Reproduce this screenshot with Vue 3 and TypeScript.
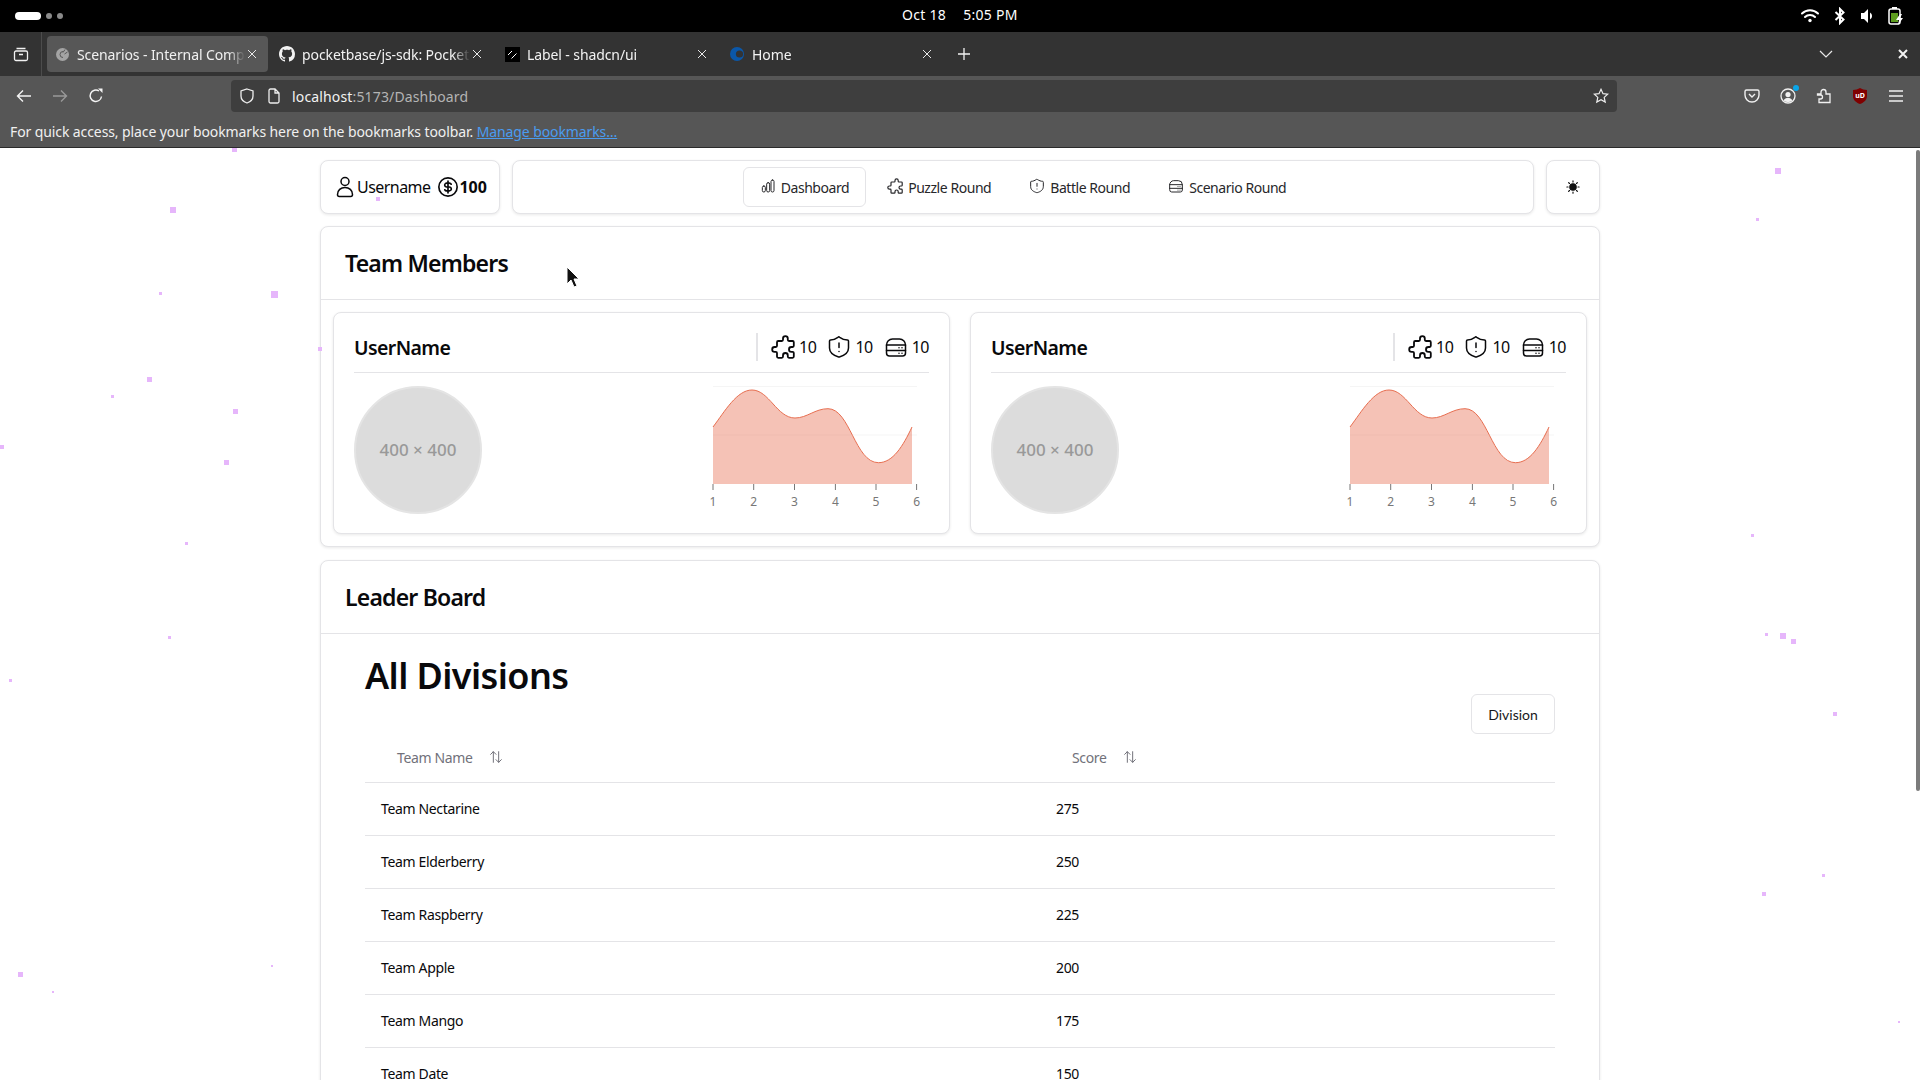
<template>
  <div class="screen">
    <!-- icon sprite -->
    <svg class="sprite" aria-hidden="true">
      <symbol id="i-puzzle" viewBox="2 2 20 20"><path transform="matrix(-1 0 0 1 24 0)" d="M4 7h3a1 1 0 0 0 1-1v-1a2 2 0 0 1 4 0v1a1 1 0 0 0 1 1h3a1 1 0 0 1 1 1v3a1 1 0 0 0 1 1h1a2 2 0 0 1 0 4h-1a1 1 0 0 0-1 1v3a1 1 0 0 1-1 1h-3a1 1 0 0 1-1-1v-1a2 2 0 0 0-4 0v1a1 1 0 0 1-1 1h-3a1 1 0 0 1-1-1v-3a1 1 0 0 1 1-1h1a2 2 0 0 0 0-4h-1a1 1 0 0 1-1-1v-3a1 1 0 0 1 1-1" /></symbol>
      <symbol id="i-shield" viewBox="0 0 24 24"><path d="M21.500 13c0 5-4.200 7.500-9.100 8.950a1 1 0 0 1-.800 0C6.700 20.500 2.500 18 2.500 13V6a1 1 0 0 1 1-1c2.400 0 5.300-1.200 7.400-2.720a1.300 1.300 0 0 1 1.800 0C14.800 3.810 18.100 5 20.500 5a1 1 0 0 1 1 1z" /><path d="M12 8v4.500M12 16.500h.01" /></symbol>
      <symbol id="i-server" viewBox="0 0 24 24"><path d="M2.500 10a6 6 0 0 1 6-6h7a6 6 0 0 1 6 6v8a3 3 0 0 1-3 3h-13a3 3 0 0 1-3-3z" /><path d="M2.500 10h19M2.500 15.500h19M15 12.800h.01M18 12.800h.01M15 18.200h.01M18 18.200h.01" /></symbol>
      <symbol id="i-bars" viewBox="0 0 24 24"><rect x="3.500" y="12" width="4.500" height="9" rx="2.200" /><rect x="10" y="7" width="4.500" height="14" rx="2.200" /><rect x="16.500" y="3" width="4.500" height="18" rx="2.200" /></symbol>
      <symbol id="i-user" viewBox="0 0 24 24"><circle cx="12" cy="6.500" r="4" /><path d="M4.500 19.500c0-4.200 3.300-7 7.500-7s7.500 2.800 7.500 7c0 1-.800 2-1.800 2H6.300c-1 0-1.800-1-1.800-2z" /></symbol>
      <symbol id="i-coin" viewBox="0 0 24 24"><circle cx="12" cy="12" r="10" /><path d="M15.500 9a2.300 2.300 0 0 0-2-1.200h-3a2.100 2.100 0 1 0 0 4.200h3a2.100 2.100 0 1 1 0 4.200h-3a2.300 2.300 0 0 1-2-1.200M12 5.500v13" /></symbol>
      <symbol id="i-sort" viewBox="0 0 24 24"><path d="M8 20V4L4 8M8 4l4 4M16 4v16l-4-4M16 20l4-4" /></symbol>
    </svg>

    <!-- desktop status bar -->
    <div class="status-bar">
      <div class="workspaces">
        <span class="ws-active"></span><span class="ws-dot"></span><span class="ws-dot"></span>
      </div>
      <div class="clock"><span>Oct 18</span><span>5:05 PM</span></div>
      <div class="tray">
        <svg width="20" height="16" viewBox="0 0 20 16" fill="none" stroke="#fff" stroke-width="2" stroke-linecap="round"><path d="M2 5.500a11.500 11.500 0 0 1 16 0M5 9a7 7 0 0 1 10 0" /><circle cx="10" cy="12.500" r="1.700" fill="#fff" stroke="none" /></svg>
        <svg width="12" height="18" viewBox="0 0 12 18" fill="none" stroke="#fff" stroke-width="2"><path d="M1.500 5l8 7.500-3.500 3.500V2l3.500 3.500-8 7.500" /></svg>
        <svg width="14" height="16" viewBox="0 0 14 16" fill="#fff"><path d="M1 5h3l4-4v14l-4-4H1z" /><path d="M10 4.500a4 4 0 0 1 0 7z" /></svg>
        <svg width="16" height="20" viewBox="0 0 16 20"><rect x="1" y="3" width="11" height="15" rx="2" fill="none" stroke="#fff" stroke-width="1.500" /><rect x="4" y="1" width="5" height="2" fill="#fff" /><rect x="3" y="7" width="7" height="9" fill="#5d9c1e" /><path d="M12 8l-4 6h3l-1 5 5-7h-3l2-4z" fill="#fff" /></svg>
      </div>
    </div>

    <!-- browser tabs -->
    <div class="tab-bar">
      <div class="sidebar-btn">
        <svg width="16" height="16" viewBox="0 0 16 16" fill="none" stroke="#f2f2f2" stroke-width="1.300"><rect x="1.500" y="5" width="13" height="9.500" rx="1.500" /><path d="M3.500 2.500h9M6 8.500h4" /></svg>
      </div>
      <div v-for="tab in tabs" :key="tab.title" class="tab" :class="{ 'tab--active': tab.active }">
        <span class="favicon">
          <svg v-if="tab.icon === 'github'" width="16" height="16" viewBox="0 0 16 16" fill="#f2f2f2"><path d="M8 0C3.580 0 0 3.580 0 8c0 3.540 2.290 6.530 5.470 7.590.4.070.55-.17.55-.38 0-.19-.01-.82-.01-1.490-2.010.37-2.530-.49-2.690-.94-.09-.23-.48-.94-.82-1.130-.28-.15-.68-.52-.01-.53.630-.01 1.080.58 1.230.82.720 1.210 1.870.87 2.330.66.070-.52.280-.87.510-1.070-1.780-.2-3.640-.89-3.640-3.950 0-.87.310-1.590.820-2.150-.08-.2-.36-1.020.080-2.120 0 0 .670-.21 2.200.82.640-.18 1.320-.27 2-.27s1.360.09 2 .27c1.530-1.040 2.200-.82 2.200-.82.440 1.100.160 1.920.080 2.120.510.560.820 1.270.820 2.150 0 3.070-1.870 3.750-3.650 3.950.290.250.540.730.540 1.480 0 1.070-.010 1.930-.010 2.200 0 .210.150.460.550.380A8.010 8.010 0 0 0 16 8c0-4.420-3.580-8-8-8z" /></svg>
          <svg v-else-if="tab.icon === 'shadcn'" width="15" height="15" viewBox="0 0 15 15"><rect width="15" height="15" fill="#000" /><path d="M3 8l4-4M6.500 11.500l5-5" stroke="#fff" stroke-width="1" /></svg>
          <svg v-else-if="tab.icon === 'home'" width="16" height="16" viewBox="0 0 16 16"><circle cx="8" cy="8" r="7" fill="#0b57a8" /><circle cx="10.500" cy="8" r="3.600" fill="#333" /></svg>
          <svg v-else width="15" height="15" viewBox="0 0 15 15"><circle cx="7.500" cy="7.500" r="6.500" fill="#a4a4a4" /><path d="M8 4.500a3 3 0 1 0 0 6M10 2.500l-2 3M12.500 5l-3 2" stroke="#575757" fill="none" /></svg>
        </span>
        <span class="tab-title">{{ tab.title }}</span>
        <svg class="tab-close" width="10" height="10" viewBox="0 0 10 10" stroke="#e8e8e8" stroke-width="1"><path d="M1 1l8 8M9 1l-8 8" /></svg>
      </div>
      <svg class="new-tab" width="14" height="14" viewBox="0 0 14 14" stroke="#f2f2f2" stroke-width="1.300"><path d="M7 1v12M1 7h12" /></svg>
      <div class="tab-bar-end">
        <svg width="14" height="8" viewBox="0 0 14 8" fill="none" stroke="#e8e8e8" stroke-width="1.200"><path d="M1 1l6 6 6-6" /></svg>
        <svg width="10" height="10" viewBox="0 0 10 10" stroke="#f2f2f2" stroke-width="2"><path d="M1 1l8 8M9 1l-8 8" /></svg>
      </div>
    </div>

    <!-- browser toolbar -->
    <div class="toolbar">
      <div class="nav-buttons">
        <svg width="16" height="14" viewBox="0 0 16 14" fill="none" stroke="#f4f4f4" stroke-width="1.400"><path d="M15 7H1.500M7 1.500L1.500 7 7 12.500" /></svg>
        <svg width="16" height="14" viewBox="0 0 16 14" fill="none" stroke="#999" stroke-width="1.400"><path d="M1 7h13.500M9 1.500L14.500 7 9 12.500" /></svg>
        <svg width="16" height="16" viewBox="0 0 16 16" fill="none" stroke="#f4f4f4" stroke-width="1.400"><path d="M13.500 8.500A5.700 5.700 0 1 1 11 3" /><path d="M10 .5h4.500V5z" fill="#f4f4f4" stroke="none" /></svg>
      </div>
      <div class="url-box">
        <svg width="14" height="16" viewBox="0 0 14 16" fill="none" stroke="#eee" stroke-width="1.300"><path d="M7 1l6 2v5c0 3.500-3 6-6 7-3-1-6-3.500-6-7V3z" /></svg>
        <svg width="12" height="16" viewBox="0 0 12 16" fill="none" stroke="#eee" stroke-width="1.300"><path d="M1 2.500A1.500 1.500 0 0 1 2.500 1H7l4 4v8.500a1.500 1.500 0 0 1-1.500 1.500h-7A1.500 1.500 0 0 1 1 13.500zM7 1v4h4" /></svg>
        <span class="url"><span class="url-host">localhost</span>:5173/Dashboard</span>
        <svg class="url-star" width="16" height="16" viewBox="0 0 16 16" fill="none" stroke="#eee" stroke-width="1.200"><path d="M8 1.300l2 4.400 4.700.5-3.500 3.200 1 4.700L8 11.700l-4.200 2.400 1-4.700L1.300 6.200 6 5.700z" /></svg>
      </div>
      <div class="toolbar-icons">
        <svg width="16" height="14" viewBox="0 0 16 14" fill="none" stroke="#f0f0f0" stroke-width="1.400"><path d="M1 2.500A1.500 1.500 0 0 1 2.500 1h11A1.500 1.500 0 0 1 15 2.500V6a7 7 0 0 1-14 0z" /><path d="M5 5l3 3 3-3" /></svg>
        <span class="account">
          <svg width="16" height="16" viewBox="0 0 16 16" fill="#f0f0f0"><circle cx="8" cy="8" r="7" fill="none" stroke="#f0f0f0" stroke-width="1.300" /><circle cx="8" cy="6.500" r="2.600" /><path d="M3.600 12.500c1-2 2.600-2.800 4.400-2.800s3.400.8 4.400 2.800A6 6 0 0 1 8 14a6 6 0 0 1-4.400-1.500z" /></svg>
          <span class="account-dot"></span>
        </span>
        <svg width="16" height="16" viewBox="0 0 16 16" fill="none" stroke="#f0f0f0" stroke-width="1.300"><path d="M1.500 6H5V4a2.500 2.500 0 0 1 5 0v2h4v8.500H3V11h1.500a2 2 0 0 0 0-4H1.500z" /></svg>
        <svg width="16" height="18" viewBox="0 0 16 18"><path d="M8 1c2 1.300 4.500 2 7 2v6c0 4-3 6.500-7 8-4-1.500-7-4-7-8V3c2.500 0 5-.7 7-2z" fill="#800000" /><text x="8" y="11" text-anchor="middle" class="ublock">uD</text></svg>
        <svg width="16" height="12" viewBox="0 0 16 12" stroke="#f0f0f0" stroke-width="1.300"><path d="M1 1h14M1 6h14M1 11h14" /></svg>
      </div>
    </div>

    <div class="bookmarks-bar">
      For quick access, place your bookmarks here on the bookmarks toolbar.
      <a class="manage-link">Manage bookmarks…</a>
    </div>

    <!-- the page itself -->
    <div class="viewport">
      <main class="page">
        <header class="top-row">
          <div class="panel user-box">
            <svg class="ico ico--24"><use href="#i-user" /></svg>
            <span class="user-name">Username</span>
            <svg class="ico ico--coin"><use href="#i-coin" /></svg>
            <b class="coins">100</b>
          </div>
          <nav class="panel nav-box">
            <a
              v-for="item in navItems"
              :key="item.label"
              class="nav-item"
              :class="{ 'nav-item--active': item.active }"
            >
              <svg class="ico ico--nav"><use :href="item.icon" /></svg>
              {{ item.label }}
            </a>
          </nav>
          <div class="panel theme-box">
            <svg width="14" height="14" viewBox="0 0 24 24" fill="#111" stroke="#111" stroke-width="2" stroke-linecap="round"><circle cx="12" cy="12" r="5.500" /><path d="M12 1.500v2M12 20.500v2M1.500 12h2M20.500 12h2M4.500 4.500l1.500 1.500M18 18l1.500 1.500M4.500 19.500L6 18M18 6l1.500-1.500" /></svg>
          </div>
        </header>

        <section class="panel card">
          <h2 class="card-title">Team Members</h2>
          <div class="members">
            <article v-for="n in 2" :key="n" class="panel member">
              <div class="member-head">
                <h3 class="member-name">UserName</h3>
                <div class="member-stats">
                  <span class="stat"><svg class="ico ico--24 ico--stat"><use href="#i-puzzle" /></svg>10</span>
                  <span class="stat"><svg class="ico ico--24 ico--stat"><use href="#i-shield" /></svg>10</span>
                  <span class="stat"><svg class="ico ico--24 ico--stat"><use href="#i-server" /></svg>10</span>
                </div>
              </div>
              <div class="member-body">
                <div class="avatar">400 × 400</div>
                <svg class="chart" width="224" height="128" viewBox="0 0 224 128">
                  <path d="M8 .5h204M8 49h204" stroke="#f5f5f5" fill="none" />
                  <path :d="areaPath" fill="#e76e50" fill-opacity=".42" />
                  <path :d="linePath" fill="none" stroke="#e76e50" stroke-width="1" />
                  <template v-for="(x, i) in chartTicks" :key="x">
                    <path :d="`M${x} 98v6`" stroke="#777" fill="none" />
                    <text :x="x" y="120" text-anchor="middle" class="chart-label">{{ i + 1 }}</text>
                  </template>
                </svg>
              </div>
            </article>
          </div>
        </section>

        <section class="panel card card--board">
          <h2 class="card-title">Leader Board</h2>
          <div class="board">
            <h1 class="board-title">All Divisions</h1>
            <div class="board-tools">
              <button class="division-btn">Division</button>
            </div>
            <div class="table-row table-row--head">
              <span class="head-cell head-cell--name">Team Name <svg class="ico ico--sort"><use href="#i-sort" /></svg></span>
              <span class="head-cell head-cell--score">Score <svg class="ico ico--sort"><use href="#i-sort" /></svg></span>
            </div>
            <div v-for="team in teams" :key="team.name" class="table-row">
              <span class="cell">{{ team.name }}</span>
              <span class="cell">{{ team.score }}</span>
            </div>
          </div>
        </section>
      </main>

      <!-- floating particles over the page -->
      <div class="particles">
        <span
          v-for="(p, i) in particles"
          :key="i"
          class="particle"
          :style="{ left: p[0] + 'px', top: p[1] - 148 + 'px', width: p[2] + 'px', height: p[2] + 'px' }"
        ></span>
      </div>

      <svg class="cursor" width="14" height="22" viewBox="0 0 14 22"><path d="M1 1v17l4-4 3 7 3-1-3-7h5z" fill="#111" stroke="#fff" stroke-width="1" /></svg>
      <div class="scroll-thumb"></div>
    </div>
  </div>
</template>

<script setup lang="ts">
interface Tab {
  title: string
  icon: 'app' | 'github' | 'shadcn' | 'home'
  active?: boolean
}

const tabs: Tab[] = [
  { title: 'Scenarios - Internal Competition', icon: 'app', active: true },
  { title: 'pocketbase/js-sdk: PocketBase', icon: 'github' },
  { title: 'Label - shadcn/ui', icon: 'shadcn' },
  { title: 'Home', icon: 'home' }
]

const navItems = [
  { label: 'Dashboard', icon: '#i-bars', active: true },
  { label: 'Puzzle Round', icon: '#i-puzzle' },
  { label: 'Battle Round', icon: '#i-shield' },
  { label: 'Scenario Round', icon: '#i-server' }
]

const teams = [
  { name: 'Team Nectarine', score: 275 },
  { name: 'Team Elderberry', score: 250 },
  { name: 'Team Raspberry', score: 225 },
  { name: 'Team Apple', score: 200 },
  { name: 'Team Mango', score: 175 },
  { name: 'Team Date', score: 150 }
]

// chart geometry, in the svg's own coordinates
const chartTicks = [8, 48.7, 89.5, 130.4, 171, 211.6]
const linePath =
  'M8 41C20 25 32 4 47 4C64 4 72 32 90 32C102 32 110 22.700 123 22.700C145 22.700 150 76.700 173.400 76.700C188 76.700 198 60 207 41'
const areaPath = `${linePath}L207 98L8 98Z`

// x, y (page coordinates) and size
const particles: [number, number, number][] = [
  [170, 207, 6], [159, 292, 3], [271, 291, 7], [318, 347, 4], [147, 377, 5],
  [111, 395, 3], [233, 409, 5], [0, 445, 4], [224, 460, 5], [185, 542, 3],
  [168, 636, 3], [232, 147, 5], [376, 197, 4], [9, 679, 3], [18, 972, 5],
  [52, 991, 2], [271, 965, 2], [1775, 168, 6], [1756, 218, 3], [1751, 534, 3],
  [1765, 633, 3], [1780, 633, 6], [1791, 639, 5], [1833, 712, 4], [1822, 874, 3],
  [1762, 892, 4], [1898, 1021, 2]
]
</script>

<style>
html,
body {
  margin: 0;
  overflow: hidden;
  background: #fff;
}
</style>

<style scoped>
.screen {
  position: relative;
  width: 1920px;
  height: 1080px;
  overflow: hidden;
  display: flex;
  flex-direction: column;
  background: #fff;
  color: #09090b;
  font-family: 'Noto Sans', 'Open Sans', sans-serif;
}

.sprite {
  position: absolute;
  width: 0;
  height: 0;
}

/* status bar */
.status-bar {
  height: 32px;
  flex: none;
  display: flex;
  align-items: center;
  justify-content: space-between;
  background: #000;
  color: #fff;
  font-size: 14px;
  padding: 0 16px 0 15px;
  position: relative;
}

.workspaces {
  display: flex;
  align-items: center;
  gap: 5px;
}

.ws-active {
  width: 26px;
  height: 8px;
  border-radius: 4px;
  background: #fff;
}

.ws-dot {
  width: 6px;
  height: 6px;
  border-radius: 50%;
  background: #8a8a8a;
}

.clock {
  position: absolute;
  left: 902px;
  top: 5px;
  display: flex;
  gap: 17px;
  letter-spacing: 0.3px;
}

.tray {
  display: flex;
  align-items: center;
  gap: 14px;
}

/* tabs */
.tab-bar {
  height: 44px;
  flex: none;
  display: flex;
  align-items: center;
  background: #333;
  color: #f2f2f2;
  font-size: 14px;
  letter-spacing: -0.1px;
}

.sidebar-btn {
  width: 42px;
  height: 44px;
  flex: none;
  display: flex;
  align-items: center;
  justify-content: center;
  border-right: 1px solid #4c4c4c;
  box-sizing: border-box;
  margin-right: 5px;
}

.tab {
  width: 221px;
  height: 36px;
  flex: none;
  margin-right: 4px;
  border-radius: 4px;
  display: flex;
  align-items: center;
  box-sizing: border-box;
  padding: 0 11px 0 7px;
  gap: 7px;
}

.tab--active {
  background: #575757;
  color: #f0f0f0;
}

.favicon {
  width: 16px;
  height: 16px;
  flex: none;
  display: flex;
  align-items: center;
  justify-content: center;
}

.tab-title {
  flex: 1;
  min-width: 0;
  margin-right: -5px;
  white-space: nowrap;
  overflow: hidden;
  -webkit-mask-image: linear-gradient(90deg, #000 90%, transparent);
  mask-image: linear-gradient(90deg, #000 90%, transparent);
}

.new-tab {
  margin-left: 10px;
}

.tab-bar-end {
  margin-left: auto;
  display: flex;
  align-items: center;
  gap: 65px;
  padding-right: 12px;
}

/* toolbar */
.toolbar {
  height: 36px;
  flex: none;
  display: flex;
  align-items: center;
  background: #565656;
}

.nav-buttons {
  width: 231px;
  flex: none;
  box-sizing: border-box;
  padding: 3px 0 0 16px;
  display: flex;
  align-items: center;
  gap: 20px;
}

.url-box {
  width: 1386px;
  height: 32px;
  margin-top: 4px;
  flex: none;
  box-sizing: border-box;
  border-radius: 4px;
  background: #3e3e3e;
  display: flex;
  align-items: center;
  padding: 0 8px 0 9px;
  gap: 14px;
  font-size: 14px;
  color: #b4b4b4;
}

.url {
  margin-left: -2px;
  letter-spacing: 0.15px;
}

.url-host {
  color: #f2f2f2;
}

.url-star {
  margin-left: auto;
}

.toolbar-icons {
  flex: 1;
  display: flex;
  align-items: center;
  justify-content: flex-end;
  gap: 20px;
  padding: 3px 16px 0 0;
}

.account {
  position: relative;
  display: flex;
}

.account-dot {
  position: absolute;
  top: -3px;
  right: -3px;
  width: 6px;
  height: 6px;
  border-radius: 50%;
  background: #0aa5e8;
}

.ublock {
  fill: #fff;
  font-size: 7px;
  font-weight: 700;
}

.bookmarks-bar {
  height: 36px;
  flex: none;
  box-sizing: border-box;
  background: #565656;
  border-bottom: 1px solid #2a2a2a;
  color: #f0f0f0;
  font-size: 14px;
  letter-spacing: -0.1px;
  padding: 10px 0 0 10px;
}

.manage-link {
  color: #4a9cf0;
  text-decoration: underline;
}

/* page */
.viewport {
  position: relative;
  flex: 1;
  min-height: 0;
  overflow: hidden;
}

.page {
  width: 1280px;
  margin: 0 auto;
  padding-top: 12px;
  display: flex;
  flex-direction: column;
  gap: 12px;
}

.panel {
  background: #fff;
  border: 1px solid #e4e4e7;
  border-radius: 8px;
  box-shadow: 0 1px 3px rgba(0, 0, 0, 0.09);
  box-sizing: border-box;
}

.top-row {
  display: flex;
  gap: 12px;
  height: 54px;
}

.user-box {
  width: 180px;
  flex: none;
  display: flex;
  align-items: center;
  padding-left: 12px;
  font-size: 16px;
}

.user-name {
  letter-spacing: -0.55px;
}

.coins {
  font-weight: 700;
}

.ico {
  fill: none;
  stroke: currentColor;
  stroke-width: 1.500;
  stroke-linecap: round;
  stroke-linejoin: round;
  flex: none;
}

.ico--24 {
  width: 24px;
  height: 24px;
}

.ico--coin {
  width: 22px;
  height: 22px;
  margin-left: 7px;
  stroke-width: 1.800;
}

.ico--nav {
  width: 16px;
  height: 16px;
  margin-top: -3px;
}

.ico--stat {
  stroke-width: 1.500;
}

.ico--sort {
  width: 16px;
  height: 16px;
  margin-left: 15px;
}

.nav-box {
  flex: 1;
  display: flex;
  align-items: center;
  justify-content: center;
  gap: 4px;
}

.nav-item {
  height: 40px;
  box-sizing: border-box;
  padding: 0 16px;
  border: 1px solid transparent;
  border-radius: 6px;
  display: flex;
  align-items: center;
  gap: 5px;
  font-size: 14px;
  letter-spacing: -0.45px;
  color: #27272a;
}

.nav-item--active {
  border-color: #e4e4e7;
}

.theme-box {
  width: 54px;
  flex: none;
  display: flex;
  align-items: center;
  justify-content: center;
}

.card--board {
  margin-top: 1px;
}

.card-title {
  margin: 0;
  height: 72px;
  display: flex;
  align-items: center;
  padding-left: 24px;
  font-size: 23px;
  font-weight: 600;
  letter-spacing: -0.8px;
  border-bottom: 1px solid #e4e4e7;
  box-sizing: content-box;
}

.members {
  display: grid;
  grid-template-columns: 1fr 1fr;
  gap: 20px;
  padding: 12px;
}

.member {
  height: 222px;
  padding: 0 20px;
}

.member-head {
  height: 60px;
  box-sizing: border-box;
  padding-top: 8px;
  display: flex;
  align-items: center;
  justify-content: space-between;
  border-bottom: 1px solid #e4e4e7;
}

.member-name {
  margin: 2px 0 0;
  font-size: 19.500px;
  font-weight: 600;
  letter-spacing: -0.6px;
}

.member-stats {
  display: flex;
  align-items: center;
  gap: 11px;
  height: 28px;
  border-left: 2px solid #e4e4e7;
  padding-left: 13px;
  font-size: 16px;
  letter-spacing: -0.5px;
}

.stat {
  display: flex;
  align-items: center;
  gap: 4px;
}

.member-body {
  display: flex;
  justify-content: space-between;
  padding-top: 13px;
}

.avatar {
  width: 128px;
  height: 128px;
  flex: none;
  box-sizing: border-box;
  border-radius: 50%;
  border: 2px solid #e4e4e4;
  background: #dcdcdc;
  color: #999;
  font-size: 17px;
  font-weight: 500;
  padding-bottom: 2px;
  display: flex;
  align-items: center;
  justify-content: center;
}

.chart {
  display: block;
  flex: none;
}

.chart-label {
  font-size: 12px;
  fill: #777;
}

.board {
  padding: 22px 44px 0;
}

.board-title {
  margin: 0;
  height: 38px;
  line-height: 40px;
  font-size: 36px;
  font-weight: 600;
  letter-spacing: -0.6px;
}

.board-tools {
  display: flex;
  justify-content: flex-end;
  height: 40px;
}

.division-btn {
  width: 84px;
  height: 40px;
  background: #fff;
  border: 1px solid #e4e4e7;
  border-radius: 6px;
  font-family: Lato, sans-serif;
  font-size: 14px;
  color: #18181b;
  padding: 0;
}

.table-row {
  display: grid;
  grid-template-columns: 675px 1fr;
  align-items: center;
  height: 53px;
  box-sizing: border-box;
  padding-bottom: 2px;
  border-bottom: 1px solid #e4e4e7;
  font-size: 14px;
  letter-spacing: -0.35px;
}

.table-row--head {
  height: 49px;
}

.cell {
  padding-left: 16px;
}

.head-cell {
  display: flex;
  align-items: center;
  color: #71717a;
}

.head-cell--name {
  padding-left: 32px;
}

.head-cell--score {
  padding-left: 32px;
}

/* overlays */
.particles {
  position: absolute;
  inset: 0;
  pointer-events: none;
}

.particle {
  position: absolute;
  background: #e6b6fb;
}

.cursor {
  position: absolute;
  left: 566px;
  top: 118px;
}

.scroll-thumb {
  position: absolute;
  right: 0;
  top: 2px;
  width: 4px;
  height: 641px;
  border-radius: 2px;
  background: #7b7b7b;
}
</style>
